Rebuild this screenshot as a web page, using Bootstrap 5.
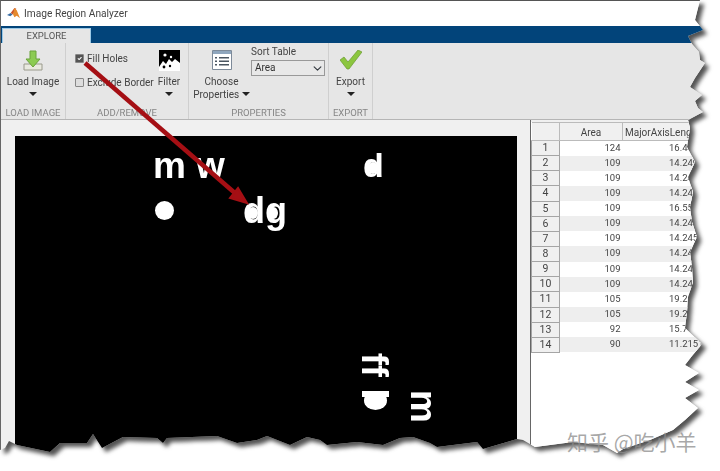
<!DOCTYPE html>
<html lang="en">
<head>
  <meta charset="UTF-8">
  <title>Image Region Analyzer</title>
  <link href="https://cdn.jsdelivr.net/npm/bootstrap@5.3.0/dist/css/bootstrap.min.css" rel="stylesheet">
  <style>
    html, body { background: #fff; overflow: hidden; }
    .stage { position: relative; width: 720px; height: 471px; overflow: hidden; font-family: Roboto, "Liberation Sans", sans-serif; font-size: 10px; color: #444; }
    .torn { filter: drop-shadow(4px 4px 2px rgba(40,40,40,.8)); height: 471px; }
    .win {
      height: 471px; background: #f0f0f0; border-top: 1px solid #555; border-left: 1px solid #666;
      clip-path: polygon(0 0, 700px 0, 695px 20px, 703px 30px, 688px 36px, 692px 44px, 699px 52px, 700px 60px, 705px 63px, 695px 78px, 690px 87px, 702px 95px, 695px 101px, 698px 108px, 703px 112px, 688px 120px, 690px 128px, 687px 147px, 695px 162px, 688px 177px, 693px 192px, 690px 207px, 692px 222px, 697px 237px, 690px 252px, 692px 267px, 693px 282px, 688px 297px, 687px 312px, 685px 328px, 702px 344px, 692px 356px, 685px 365px, 699px 373px, 685px 382px, 699px 390px, 685px 398px, 698px 408px, 685px 420px, 673px 430px, 650px 440px, 623px 449px, 617px 453px, 603px 445px, 573px 442px, 535px 447px, 523px 440px, 517px 439px, 483px 449px, 477px 442px, 437px 447px, 430px 443px, 413px 437px, 400px 438px, 383px 445px, 357px 442px, 327px 445px, 320px 440px, 307px 437px, 290px 445px, 267px 436px, 257px 440px, 237px 443px, 217px 436px, 167px 438px, 163px 443px, 157px 438px, 123px 437px, 102px 448px, 93px 434px, 87px 443px, 60px 443px, 50px 452px, 17px 445px, 9px 441px, 5px 448px, 0 450px);
    }
    .titlebar { height: 25px; background: #fff; font-size: 10.200px; color: #444; }
    .title-logo { margin: 0 4px 0 6px; }
    .tabstrip { height: 17px; background: #02447a; padding: 2px 0 0 1px; }
    .tab-on { width: 89px; height: 15px; background: #e6e6e6; border-top: 1px solid #9cc9e6; border-left: 1px solid #9cc9e6; border-right: 1px solid #9cc9e6; font-size: 9.500px; line-height: 14px; color: #555; text-align: center; }
    .ribbon { height: 77px; background: #e6e6e6; border-bottom: 1px solid #b5b5b5; }
    .rib-group { border-right: 1px solid #cfcfcf; height: 76px; }
    .w-load { width: 65px; }
    .w-add { width: 123px; }
    .w-props { width: 140px; }
    .w-export { width: 44px; }
    .rib-body { height: 62px; }
    .rib-label { height: 14px; font-size: 9.500px; line-height: 15px; color: #858585; text-align: center; white-space: nowrap; }
    .tool { line-height: 13px; text-align: center; white-space: nowrap; }
    .tool svg { display: block; margin: 0 auto; }
    .tool-icon { height: 32px; padding-top: 7px; }
    .caret { display: inline-block; width: 0; height: 0; border-left: 4px solid transparent; border-right: 4px solid transparent; border-top: 4px solid #222; vertical-align: 2px; }
    .chk-col { width: 88px; padding: 3px 0 0 9px; }
    .filter-col { width: 30px; }
    .chk-row { height: 24px; white-space: nowrap; }
    .chk-row .form-check-input { flex: 0 0 9px; width: 9px; height: 9px; margin: 0 3px 0 0; border-radius: 1px; border-color: #888; background-color: #ddd; }
    .chk-row .form-check-input:checked { background-color: #555; border-color: #888; }
    .choose-col { width: 61px; padding-left: 4px; }
    .sort-col { padding: 2px 0 0 1px; }
    .sort-title { line-height: 13px; margin-bottom: 2px; }
    .sort-select { width: 74px; height: 16px; padding: 0 0 0 3px; font-size: 10px; line-height: 14px; border-radius: 0; border-color: #999; background-color: #e8e8e8; background-position: right 2px center; background-size: 9px; color: #333; font-family: inherit; }
    .content { height: 350px; }
    .left-pane { width: 530px; padding: 16px 13px 0 14px; border-right: 1px solid #666; }
    .bw-image { position: relative; height: 330px; background: #000; }
    .blob { position: absolute; color: #fff; font-family: "Liberation Sans", sans-serif; font-weight: 700; line-height: 1; white-space: nowrap; }
    .dot { position: absolute; background: #fff; }
    .right-pane { width: 180px; background: #fff; border-top: 2px solid #f0f0f0; }
    .tbl { width: 174px; table-layout: fixed; font-size: 9.500px; }
    .tbl > :not(caption) > * > * { padding: 0 2px; height: 15.150px; line-height: 14px; border: 0; box-shadow: none; color: #444; white-space: nowrap; overflow: hidden; }
    .tbl thead th { height: 18px; font-size: 10px; font-weight: 400; text-align: center; background: #f0f0f0; border-top: 1px solid #bbb; border-right: 1px solid #bbb; border-bottom: 1px solid #bbb; }
    .tbl tbody th { font-weight: 400; text-align: center; font-size: 10.500px; background: #f0f0f0; border: 1px solid #a5a5a5; border-top: 0; }
    .tbl td { text-align: right; }
    .tbl tbody tr:nth-child(even) td { background: #eeeeee; }
    .arrow-over { position: absolute; left: 0; top: 0; pointer-events: none; }
    .watermark { position: absolute; left: 567px; top: 428px; font-family: "Noto Sans CJK SC", sans-serif; font-size: 21px; line-height: 26px; color: rgba(140,140,140,.75); white-space: nowrap; }
  </style>
</head>
<body>
<div class="stage">
  <div class="torn">
    <div class="win">
      <!-- title bar -->
      <div class="titlebar d-flex align-items-center">
        <svg class="title-logo" width="13" height="13" viewBox="0 0 14 14">
          <path d="M0 8.500 4 6.500 6 8 3.500 10Z" fill="#3a6ea5"/>
          <path d="M4 6.500 8 1 10 2 6.500 8Z" fill="#c9552a"/>
          <path d="M8 1 10.500 3.500 14 12 10.500 9.500 8 11 6.500 8Z" fill="#e58a2e"/>
        </svg>
        <span>Image Region Analyzer</span>
      </div>
      <div class="tabstrip"><div class="tab-on">EXPLORE</div></div>

      <!-- toolstrip -->
      <div class="ribbon d-flex">
        <div class="rib-group w-load">
          <div class="rib-body tool">
            <div class="tool-icon">
              <svg width="22" height="22" viewBox="0 0 22 22">
                <path d="M2 14h18v6H2z" fill="#e9e9e0" stroke="#9a9a8c"/>
                <path d="M8 1h6v8h4l-7 8-7-8h4z" fill="#8ccb52" stroke="#6ba33a"/>
              </svg>
            </div>
            <div>Load Image</div>
            <div><span class="caret"></span></div>
          </div>
          <div class="rib-label">LOAD IMAGE</div>
        </div>
        <div class="rib-group w-add">
          <div class="rib-body d-flex">
            <div class="chk-col">
              <div class="chk-row d-flex align-items-center"><input class="form-check-input" type="checkbox" checked><span>Fill Holes</span></div>
              <div class="chk-row d-flex align-items-center"><input class="form-check-input" type="checkbox"><span>Exclude Border</span></div>
            </div>
            <div class="tool filter-col">
              <div class="tool-icon">
                <svg width="21" height="21" viewBox="0 0 21 21">
                  <path d="M0 0h21v21H0z" fill="#000"/>
                  <path d="M0 17l4-6 3 3 3-5 3 3 3-3 5 4v8H0z" fill="#fff"/>
                  <circle cx="6" cy="5" r="1.600" fill="#fff"/>
                  <circle cx="12" cy="7" r="1.200" fill="#fff"/>
                  <circle cx="5" cy="17" r="1.400" fill="#000"/>
                  <circle cx="11" cy="16" r="1.200" fill="#000"/>
                </svg>
              </div>
              <div>Filter</div>
              <div><span class="caret"></span></div>
            </div>
          </div>
          <div class="rib-label">ADD/REMOVE</div>
        </div>
        <div class="rib-group w-props">
          <div class="rib-body d-flex">
            <div class="tool choose-col">
              <div class="tool-icon">
                <svg width="20" height="20" viewBox="0 0 20 20">
                  <path d="M.5.5h19v19H.5z" fill="#fff" stroke="#7d8a99"/>
                  <path d="M1 1h18v3H1z" fill="#8fa6bd"/>
                  <path d="M3 7h2v1.500H3zM7 7h10v1.500H7zM3 10.500h2V12H3zM7 10.500h10V12H7zM3 14h2v1.500H3zM7 14h10v1.500H7z" fill="#4a5560"/>
                </svg>
              </div>
              <div>Choose</div>
              <div>Properties <span class="caret"></span></div>
            </div>
            <div class="sort-col">
              <div class="sort-title">Sort Table</div>
              <select class="form-select sort-select" aria-label="Sort Table"><option>Area</option></select>
            </div>
          </div>
          <div class="rib-label">PROPERTIES</div>
        </div>
        <div class="rib-group w-export">
          <div class="rib-body tool">
            <div class="tool-icon">
              <svg width="22" height="20" viewBox="0 0 22 20">
                <path d="M0 10l4-3 4 5L18 0l4 2L9 19H7z" fill="#8cc63f" stroke="#6a9a30" stroke-width=".7"/>
              </svg>
            </div>
            <div>Export</div>
            <div><span class="caret"></span></div>
          </div>
          <div class="rib-label">EXPORT</div>
        </div>
      </div>

      <!-- image and table -->
      <div class="content d-flex">
        <div class="left-pane">
          <div class="bw-image">
            <span class="blob" style="left:138px;top:11px;font-size:37px">m</span>
            <span class="blob" style="left:181px;top:11px;font-size:37px">w</span>
            <span class="blob" style="left:348px;top:12px;font-size:34px">d</span>
            <span class="dot rounded-circle" style="left:353px;top:26px;width:10px;height:12px"></span>
            <span class="dot rounded-circle" style="left:140px;top:65px;width:19px;height:19px"></span>
            <span class="blob" style="left:228px;top:57px;font-size:36px">dg</span>
            <span class="dot rounded-circle" style="left:233px;top:71px;width:10px;height:12px"></span>
            <span class="dot rounded-circle" style="left:254px;top:71px;width:9px;height:12px"></span>
            <span class="blob" style="left:347px;top:211px;font-size:36px;transform:rotate(90deg)">ff</span>
            <span class="dot rounded-circle" style="left:349px;top:255px;width:23px;height:19px"></span>
            <span class="dot" style="left:347px;top:255px;width:27px;height:6px"></span>
            <span class="blob" style="left:392px;top:252px;font-size:37px;transform:rotate(90deg)">m</span>
          </div>
        </div>
        <div class="right-pane overflow-hidden">
          <table class="table tbl mb-0">
            <colgroup><col style="width:28px"><col style="width:63px"><col style="width:83px"></colgroup>
            <thead><tr><th></th><th>Area</th><th class="text-start">MajorAxisLength</th></tr></thead>
            <tbody id="regionRows"></tbody>
          </table>
        </div>
      </div>
    </div>
  </div>

  <!-- red annotation arrow -->
  <svg class="arrow-over" width="720" height="471" viewBox="0 0 720 471">
    <path d="M85 63 236 194" stroke="#a50f14" stroke-width="4.500" fill="none"/>
    <path d="M247 203 230 198 238 188Z" fill="#a50f14" stroke="#a50f14" stroke-width="2"/>
  </svg>
  <div class="watermark">知乎 @吃小羊</div>
</div>

<script src="https://cdn.jsdelivr.net/npm/bootstrap@5.3.0/dist/js/bootstrap.bundle.min.js"></script>
<script>
  // Area and major axis length per region
  const regions = [
    [124, '16.4413'], [109, '14.2494'], [109, '14.2494'], [109, '14.2494'], [109, '16.5500'],
    [109, '14.2494'], [109, '14.2456'], [109, '14.2494'], [109, '14.2494'], [109, '14.2494'],
    [105, '19.2934'], [105, '19.2934'], [92, '15.7142'], [90, '11.2151']
  ];
  const rows = document.getElementById('regionRows');
  regions.forEach((r, i) => {
    rows.insertAdjacentHTML('beforeend', `<tr><th>${i + 1}</th><td>${r[0]}</td><td>${r[1]}</td></tr>`);
  });
</script>
</body>
</html>
